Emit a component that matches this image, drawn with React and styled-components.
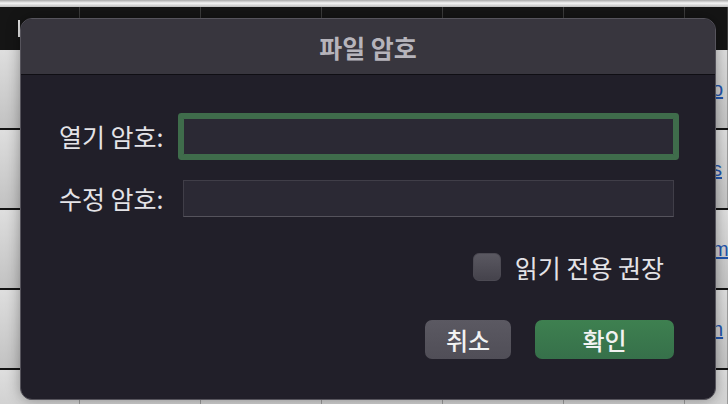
import React from "react";
import styled, { createGlobalStyle } from "styled-components";

const GlobalStyle = createGlobalStyle`
  html, body {
    margin: 0;
    padding: 0;
    background: #c8c8c8;
    overflow: hidden;
  }
  * {
    box-sizing: border-box;
  }
`;

const Page = styled.div`
  position: relative;
  width: 728px;
  height: 404px;
  overflow: hidden;
  font-family: "Noto Sans CJK KR", "Noto Sans", sans-serif;
`;

const Sheet = styled.div`
  display: flex;
  flex-direction: column;
  width: 100%;
  height: 100%;
`;

const TopStrip = styled.div`
  height: 7px;
  flex-shrink: 0;
  background: linear-gradient(#a9a9a9, #f4f4f4 45%, #bdbdbd);
`;

const HeaderBar = styled.div`
  display: grid;
  grid-template-columns: 80px repeat(5, 121px) 1fr;
  height: 43px;
  flex-shrink: 0;
  background: #151515;
`;

const HeaderCell = styled.div`
  position: relative;
  border-right: 1px solid #3d3d3d;
`;

const Caret = styled.span`
  position: absolute;
  left: 18px;
  top: 13px;
  width: 2px;
  height: 17px;
  background: #e8e8e8;
`;

const Row = styled.div`
  display: grid;
  grid-template-columns: 80px repeat(5, 121px) 1fr;
  height: 80px;
  flex-shrink: 0;
  border-bottom: 2px solid #121212;
  background: linear-gradient(#dedede, #c2c2c2);
`;

const Cell = styled.div`
  border-right: 1px solid #9a9a9a;
  display: flex;
  align-items: center;
  white-space: nowrap;
`;

const LinkText = styled.span`
  margin-left: 27px;
  font-family: "Liberation Sans", "DejaVu Sans", sans-serif;
  font-size: 20px;
  line-height: 1;
  color: #2154ab;
  text-decoration: underline;
`;

const Dialog = styled.div`
  position: absolute;
  left: 20px;
  top: 18px;
  width: 696px;
  height: 382px;
  display: flex;
  flex-direction: column;
  background: #211f29;
  border: 1px solid #56545c;
  border-radius: 12px;
  overflow: hidden;
  box-shadow: 0 0 14px rgba(0, 0, 0, 0.35);
`;

const TitleBar = styled.div`
  height: 56px;
  flex-shrink: 0;
  display: flex;
  align-items: center;
  justify-content: center;
  background: #38363e;
  border-bottom: 1px solid #0f0e13;
  color: #b6b4bb;
  font-size: 25px;
  font-weight: 700;
`;

const Body = styled.div`
  flex: 1;
  display: flex;
  flex-direction: column;
  padding: 43px 41px 40px 38px;
`;

const Form = styled.div`
  display: grid;
  grid-template-columns: 104px 491px;
  column-gap: 20px;
  row-gap: 25px;
  align-items: center;
`;

const Label = styled.label`
  color: #e4e3e7;
  font-size: 25px;
  line-height: 1;
  text-align: right;
  white-space: nowrap;
`;

const Field = styled.div`
  height: 37px;
  background: #2b2934;
  border: 1px solid ${(p) => (p.$focused ? "#3f6c4b" : "#403e48")};
  border-bottom-color: ${(p) => (p.$focused ? "#3f6c4b" : "#55535c")};
  border-radius: ${(p) => (p.$focused ? "1px" : "0")};
  box-shadow: ${(p) => (p.$focused ? "0 0 0 5px #3f6c4b" : "none")};
`;

const CheckRow = styled.div`
  margin-top: 36px;
  display: flex;
  justify-content: flex-end;
  align-items: center;
  gap: 14px;
  padding-right: 10px;
`;

const CheckBox = styled.span`
  width: 28px;
  height: 28px;
  flex-shrink: 0;
  border-radius: 6px;
  background: linear-gradient(#5a5861, #45434c);
  border: 1px solid #4c4a53;
`;

const CheckLabel = styled.span`
  color: #e4e3e7;
  font-size: 25px;
  line-height: 1;
  white-space: nowrap;
`;

const ButtonRow = styled.div`
  margin-top: auto;
  display: flex;
  justify-content: flex-end;
  gap: 24px;
`;

const Button = styled.button`
  width: ${(p) => (p.$primary ? "139px" : "86px")};
  height: 39px;
  border: none;
  border-radius: 7px;
  background: ${(p) =>
    p.$primary
      ? "linear-gradient(#3e8050, #36704a)"
      : "linear-gradient(#5b5962, #504e57)"};
  color: #f2f2f2;
  font-family: "Noto Sans CJK KR", "Noto Sans", sans-serif;
  font-size: 24px;
  font-weight: 500;
  line-height: 1;
  padding: 0;
`;

const links = ["o", "s", "m", "n"];

const App = () => {
  return (
    <Page>
      <GlobalStyle />
      <Sheet>
        <TopStrip />
        <HeaderBar>
          <HeaderCell>
            <Caret />
          </HeaderCell>
          {[0, 1, 2, 3, 4, 5].map((i) => (
            <HeaderCell key={i} />
          ))}
        </HeaderBar>
        {links.concat([""]).map((text, i) => (
          <Row key={i}>
            {[0, 1, 2, 3, 4, 5].map((c) => (
              <Cell key={c} />
            ))}
            <Cell>{text && <LinkText>{text}</LinkText>}</Cell>
          </Row>
        ))}
      </Sheet>
      <Dialog>
        <TitleBar>파일 암호</TitleBar>
        <Body>
          <Form>
            <Label>열기 암호:</Label>
            <Field $focused />
            <Label>수정 암호:</Label>
            <Field />
          </Form>
          <CheckRow>
            <CheckBox />
            <CheckLabel>읽기 전용 권장</CheckLabel>
          </CheckRow>
          <ButtonRow>
            <Button>취소</Button>
            <Button $primary>확인</Button>
          </ButtonRow>
        </Body>
      </Dialog>
    </Page>
  );
};

export default App;
